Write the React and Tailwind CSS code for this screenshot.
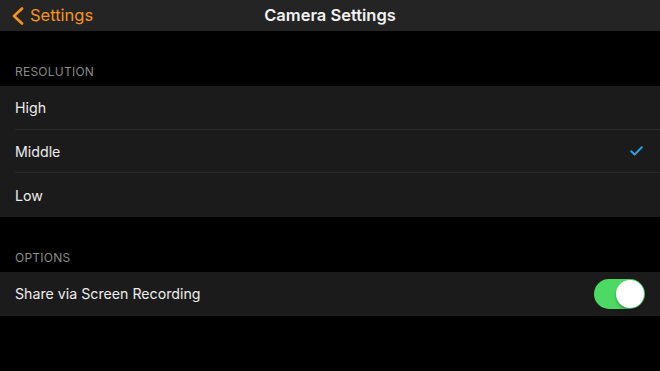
export default function App() {
  const resolutions = ["High", "Middle", "Low"];
  const selected = "Middle";

  return (
    <div
      className="h-[371px] w-[660px] overflow-hidden bg-black text-white"
      style={{ fontFamily: "Inter, 'Liberation Sans', sans-serif" }}
    >
      {/* nav bar */}
      <div className="relative flex h-[31px] items-center justify-center bg-[#242424]">
        <button type="button" className="absolute left-[11px] top-0 flex h-[31px] items-center gap-[6px] text-[#f7941d]">
          <svg width="13" height="18" viewBox="0 0 13 18" fill="none">
            <path d="M11 1.5 L3 9 L11 16.5" stroke="#f7941d" strokeWidth="2.6" strokeLinecap="round" strokeLinejoin="round" />
          </svg>
          <span className="text-[16.5px] leading-none">Settings</span>
        </button>
        <h1 className="text-[16.5px] font-semibold leading-none text-[#f2f2f2]">Camera Settings</h1>
      </div>

      {/* resolution */}
      <div className="flex h-[55px] items-end px-[15px] pb-[7px]">
        <p className="text-[12px] uppercase leading-[14px] tracking-[0.02em] text-[#8a8a8a]">Resolution</p>
      </div>
      <div className="bg-[#1b1b1b]">
        {resolutions.map((r, i) => (
          <div key={r} className="pl-[15px]">
            <div
              className={
                "flex h-[43.5px] items-center justify-between pr-[17px] " +
                (i < resolutions.length - 1 ? "border-b border-[#2a2a2a]" : "")
              }
            >
              <span className="pt-[1px] text-[14.2px] text-[#ededed]">{r}</span>
              {r === selected && (
                <svg width="13" height="10" viewBox="0 0 13 10" fill="none">
                  <path d="M1.2 5.2 L4.6 8.6 L11.8 1.2" stroke="#2a9fe4" strokeWidth="2" strokeLinecap="round" strokeLinejoin="round" />
                </svg>
              )}
            </div>
          </div>
        ))}
      </div>

      {/* options */}
      <div className="flex h-[55px] items-end px-[15px] pb-[7px]">
        <p className="text-[12px] uppercase leading-[14px] tracking-[0.02em] text-[#8a8a8a]">Options</p>
      </div>
      <div className="flex h-[44px] items-center justify-between bg-[#1b1b1b] pl-[15px] pr-[15px]">
        <span className="text-[14.2px] text-[#ededed]">Share via Screen Recording</span>
        <div className="flex h-[30px] w-[51px] items-center justify-end rounded-full bg-[#4cd964] pr-[1px]">
          <div className="h-[28px] w-[28px] rounded-full bg-white shadow-[0_2px_3px_rgba(0,0,0,0.3)]" />
        </div>
      </div>
    </div>
  );
}
